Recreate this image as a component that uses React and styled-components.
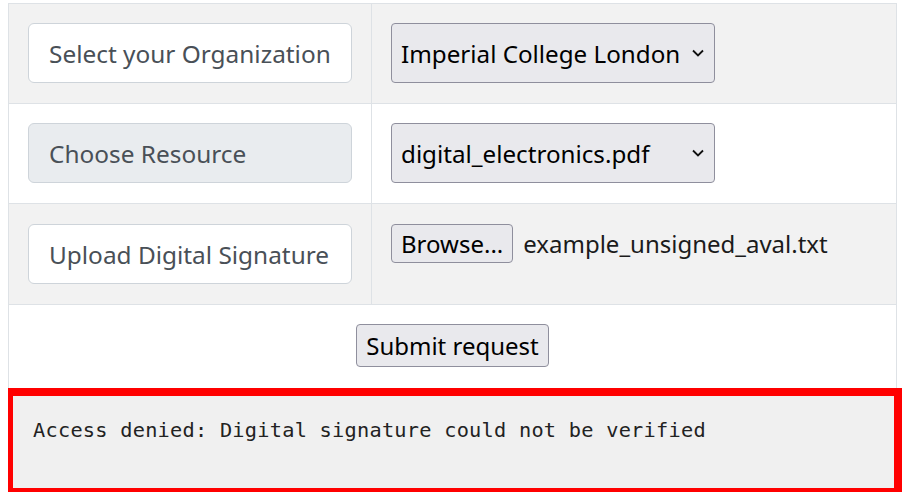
import styled, { createGlobalStyle } from "styled-components";

const GlobalStyle = createGlobalStyle`
  body {
    margin: 0;
    background: #ffffff;
    font-family: "Noto Sans", "Open Sans", sans-serif;
  }
`;

const Page = styled.div`
  padding: 3px 0 0 8px;
  width: 899px;
`;

const Table = styled.div`
  width: 889px;
  border: 1px solid #dee2e6;
  border-bottom: none;
  box-sizing: border-box;
`;

const Row = styled.div`
  display: grid;
  grid-template-columns: ${(p) => (p.$full ? "1fr" : "362px 1fr")};
  background: ${(p) => (p.$striped ? "#f2f2f2" : "#ffffff")};
  border-top: ${(p) => (p.$first ? "none" : "1px solid #dee2e6")};
`;

const Cell = styled.div`
  padding: ${(p) => p.$pad || "19px 19px 20px"};
  display: flex;
  align-items: flex-start;
  justify-content: ${(p) => (p.$center ? "center" : "flex-start")};
  gap: 10px;
  & + & {
    border-left: 1px solid #dee2e6;
  }
`;

const Label = styled.div`
  box-sizing: border-box;
  width: 324px;
  height: 60px;
  display: flex;
  align-items: center;
  padding: 0 20px;
  font-size: 24.4px;
  color: #495057;
  background: ${(p) => (p.$muted ? "#e9ecef" : "#ffffff")};
  border: 1px solid #ced4da;
  border-radius: 6px;
  white-space: nowrap;
`;

const SelectWrap = styled.div`
  position: relative;
  width: 324px;
  height: 60px;
`;

const Select = styled.select`
  appearance: none;
  box-sizing: border-box;
  width: 100%;
  height: 100%;
  padding: 0 30px 0 9px;
  font-family: inherit;
  font-size: 24.2px;
  color: #000000;
  background: #e9e9ed;
  border: 1px solid #8f8f9d;
  border-radius: 4px;
`;

const Chevron = styled.svg`
  position: absolute;
  right: 11px;
  top: 26px;
  pointer-events: none;
`;

const NativeButton = styled.button`
  box-sizing: border-box;
  height: ${(p) => p.$h || "39px"};
  padding: 0 9px;
  font-family: inherit;
  font-size: 24px;
  color: #000000;
  background: #e9e9ed;
  border: 1px solid #8f8f9d;
  border-radius: 4px;
`;

const FileName = styled.span`
  font-size: 24px;
  line-height: 39px;
  color: #1b1b1b;
`;

const Alert = styled.div`
  box-sizing: border-box;
  width: 894px;
  height: 104px;
  border-style: solid;
  border-color: #ff0000;
  border-width: 8px 8px 4px 5px;
  background: #f0f0f0;
  padding: 21px 20px 20px;
  font-family: "DejaVu Sans Mono", "Liberation Mono", monospace;
  font-size: 20.3px;
  letter-spacing: 0.25px;
  line-height: 26px;
  color: #222222;
  white-space: pre;
`;

const ChevronIcon = () => (
  <Chevron width="12" height="8" viewBox="0 0 12 8">
    <path d="M1 1.5 L6 6.5 L11 1.5" fill="none" stroke="#111" strokeWidth="1.8" />
  </Chevron>
);

const App = () => {
  return (
    <Page>
      <GlobalStyle />
      <Table>
        <Row $striped $first>
          <Cell>
            <Label>Select your Organization</Label>
          </Cell>
          <Cell>
            <SelectWrap>
              <Select defaultValue="icl">
                <option value="icl">Imperial College London</option>
              </Select>
              <ChevronIcon />
            </SelectWrap>
          </Cell>
        </Row>
        <Row>
          <Cell>
            <Label $muted>Choose Resource</Label>
          </Cell>
          <Cell>
            <SelectWrap>
              <Select defaultValue="de">
                <option value="de">digital_electronics.pdf</option>
              </Select>
              <ChevronIcon />
            </SelectWrap>
          </Cell>
        </Row>
        <Row $striped>
          <Cell $pad="20px 19px 20px">
            <Label>Upload Digital Signature</Label>
          </Cell>
          <Cell $pad="20px 19px 20px">
            <NativeButton>Browse...</NativeButton>
            <FileName>example_unsigned_aval.txt</FileName>
          </Cell>
        </Row>
        <Row $full>
          <Cell $center $pad="19px 19px 21px">
            <NativeButton $h="43px">Submit request</NativeButton>
          </Cell>
        </Row>
      </Table>
      <Alert>Access denied: Digital signature could not be verified</Alert>
    </Page>
  );
};

export default App;
